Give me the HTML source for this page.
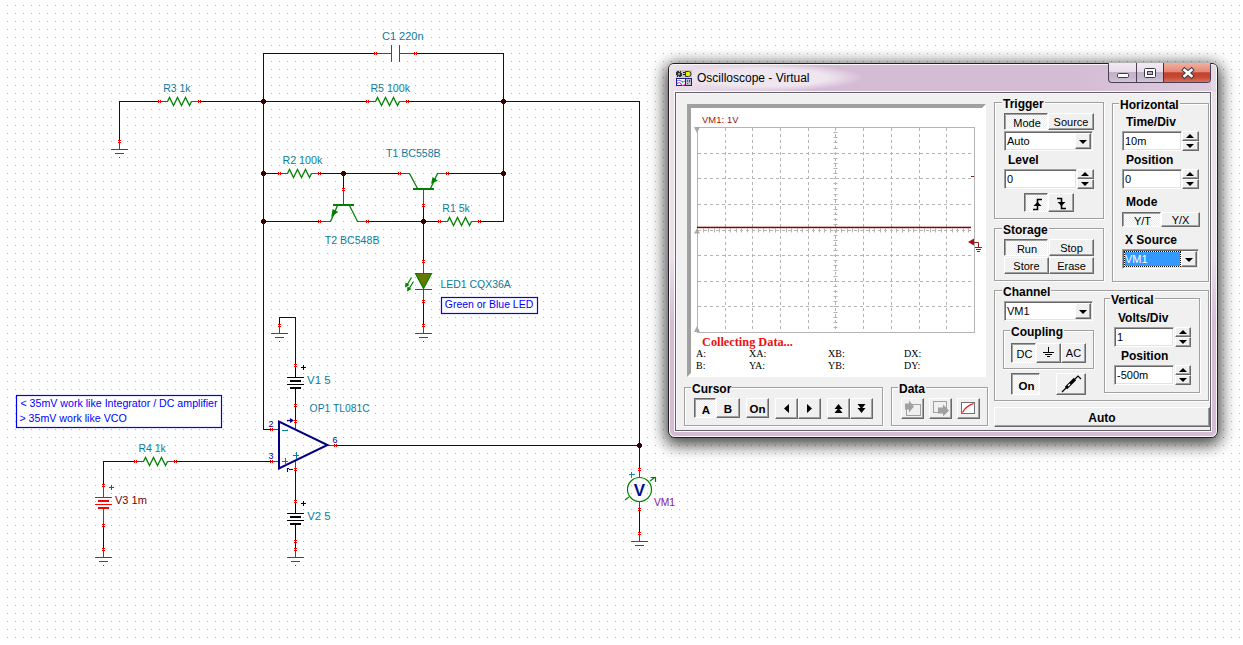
<!DOCTYPE html>
<html><head><meta charset="utf-8"><style>
html,body{margin:0;padding:0;width:1243px;height:645px;overflow:hidden;background:#fff;font-family:"Liberation Sans",sans-serif}
</style></head><body>
<svg width="1243" height="645" style="position:absolute;left:0;top:0" font-family="Liberation Sans, sans-serif">
<defs><pattern id="g" x="7" y="5" width="8" height="8" patternUnits="userSpaceOnUse"><rect width="1" height="1" fill="#b8b8b8"/></pattern></defs>
<rect width="1243" height="645" fill="#fff"/><rect width="1243" height="645" fill="url(#g)"/>
<rect x="119" y="101" width="41" height="1" fill="#3c0000"/>
<rect x="119" y="101" width="1" height="41" fill="#3c0000"/>
<rect x="119" y="143" width="1" height="7" fill="#008000"/>
<rect x="111" y="149" width="17" height="1" fill="#008000"/>
<rect x="115" y="153" width="9" height="1" fill="#008000"/>
<rect x="119" y="157" width="1" height="1" fill="#008000"/>
<path d="M118 140h1v1h-1zM120 140h1v1h-1zM118 142h1v1h-1zM120 142h1v1h-1zM119 140h1v3h-1z" fill="#ff0000"/>
<rect x="161" y="101" width="7" height="1" fill="#008000"/>
<rect x="191" y="101" width="7" height="1" fill="#008000"/>
<polyline points="167.5,101.5 169.5,97.5 173.5,105.5 177.5,97.5 181.5,105.5 185.5,97.5 189.5,105.5 191.5,101.5" fill="none" stroke="#008000" stroke-width="1.3"/>
<path d="M158 100h1v1h-1zM158 102h1v1h-1zM160 100h1v1h-1zM160 102h1v1h-1zM158 101h3v1h-3z" fill="#ff0000"/>
<path d="M198 100h1v1h-1zM198 102h1v1h-1zM200 100h1v1h-1zM200 102h1v1h-1zM198 101h3v1h-3z" fill="#ff0000"/>
<text x="163.22" y="92" fill="#0a7c9c" font-size="11" textLength="27.31" lengthAdjust="spacingAndGlyphs" >R3 1k</text>
<rect x="199" y="101" width="169" height="1" fill="#3c0000"/>
<rect x="369" y="101" width="7" height="1" fill="#008000"/>
<rect x="399" y="101" width="7" height="1" fill="#008000"/>
<polyline points="375.5,101.5 377.5,97.5 381.5,105.5 385.5,97.5 389.5,105.5 393.5,97.5 397.5,105.5 399.5,101.5" fill="none" stroke="#008000" stroke-width="1.3"/>
<path d="M366 100h1v1h-1zM366 102h1v1h-1zM368 100h1v1h-1zM368 102h1v1h-1zM366 101h3v1h-3z" fill="#ff0000"/>
<path d="M406 100h1v1h-1zM406 102h1v1h-1zM408 100h1v1h-1zM408 102h1v1h-1zM406 101h3v1h-3z" fill="#ff0000"/>
<text x="370.44" y="92" fill="#0a7c9c" font-size="11" textLength="39.55" lengthAdjust="spacingAndGlyphs" >R5 100k</text>
<rect x="407" y="101" width="233" height="1" fill="#3c0000"/>
<rect x="263" y="53" width="113" height="1" fill="#3c0000"/>
<rect x="415" y="53" width="89" height="1" fill="#3c0000"/>
<rect x="377" y="53" width="15" height="1" fill="#008000"/>
<rect x="399" y="53" width="15" height="1" fill="#008000"/>
<rect x="391" y="45" width="1" height="17" fill="#008000"/>
<rect x="399" y="45" width="1" height="17" fill="#008000"/>
<path d="M374 52h1v1h-1zM374 54h1v1h-1zM376 52h1v1h-1zM376 54h1v1h-1zM374 53h3v1h-3z" fill="#ff0000"/>
<path d="M414 52h1v1h-1zM414 54h1v1h-1zM416 52h1v1h-1zM416 54h1v1h-1zM414 53h3v1h-3z" fill="#ff0000"/>
<text x="382.00" y="40" fill="#0a7c9c" font-size="11" textLength="41.59" lengthAdjust="spacingAndGlyphs" >C1 220n</text>
<rect x="263" y="53" width="1" height="377" fill="#3c0000"/>
<rect x="503" y="53" width="1" height="169" fill="#3c0000"/>
<rect x="263" y="173" width="17" height="1" fill="#3c0000"/>
<rect x="281" y="173" width="7" height="1" fill="#008000"/>
<rect x="311" y="173" width="7" height="1" fill="#008000"/>
<polyline points="287.5,173.5 289.5,169.5 293.5,177.5 297.5,169.5 301.5,177.5 305.5,169.5 309.5,177.5 311.5,173.5" fill="none" stroke="#008000" stroke-width="1.3"/>
<path d="M278 172h1v1h-1zM278 174h1v1h-1zM280 172h1v1h-1zM280 174h1v1h-1zM278 173h3v1h-3z" fill="#ff0000"/>
<path d="M318 172h1v1h-1zM318 174h1v1h-1zM320 172h1v1h-1zM320 174h1v1h-1zM318 173h3v1h-3z" fill="#ff0000"/>
<text x="282.53" y="164" fill="#0a7c9c" font-size="11" textLength="39.75" lengthAdjust="spacingAndGlyphs" >R2 100k</text>
<rect x="319" y="173" width="81" height="1" fill="#3c0000"/>
<rect x="401" y="173" width="9" height="1" fill="#008000"/>
<polyline points="409.5,173.5 417.5,188.5" fill="none" stroke="#008000" stroke-width="1.3"/>
<rect x="413" y="188" width="21" height="2" fill="#008000"/>
<polyline points="430.5,188.5 437.5,173.5" fill="none" stroke="#008000" stroke-width="1.3"/>
<path d="M431.2 184 L432.5 177 L437.8 180.5 Z" fill="#008000"/>
<rect x="437" y="173" width="9" height="1" fill="#008000"/>
<rect x="423" y="190" width="1" height="14" fill="#008000"/>
<path d="M398 172h1v1h-1zM398 174h1v1h-1zM400 172h1v1h-1zM400 174h1v1h-1zM398 173h3v1h-3z" fill="#ff0000"/>
<path d="M446 172h1v1h-1zM446 174h1v1h-1zM448 172h1v1h-1zM448 174h1v1h-1zM446 173h3v1h-3z" fill="#ff0000"/>
<path d="M422 204h1v1h-1zM424 204h1v1h-1zM422 206h1v1h-1zM424 206h1v1h-1zM423 204h1v3h-1z" fill="#ff0000"/>
<rect x="447" y="173" width="57" height="1" fill="#3c0000"/>
<text x="386.10" y="157" fill="#0a7c9c" font-size="11" textLength="54.54" lengthAdjust="spacingAndGlyphs" >T1 BC558B</text>
<rect x="343" y="191" width="1" height="15" fill="#008000"/>
<rect x="333" y="204" width="21" height="2" fill="#008000"/>
<polyline points="337.5,205.5 330.5,221.5" fill="none" stroke="#008000" stroke-width="1.3"/>
<path d="M331.2 217 L332.6 209 L338.2 212 Z" fill="#008000"/>
<polyline points="349.5,205.5 357.5,221.5" fill="none" stroke="#008000" stroke-width="1.3"/>
<rect x="321" y="221" width="10" height="1" fill="#008000"/>
<rect x="357" y="221" width="9" height="1" fill="#008000"/>
<rect x="343" y="173" width="1" height="17" fill="#3c0000"/>
<path d="M342 188h1v1h-1zM344 188h1v1h-1zM342 190h1v1h-1zM344 190h1v1h-1zM343 188h1v3h-1z" fill="#ff0000"/>
<path d="M318 220h1v1h-1zM318 222h1v1h-1zM320 220h1v1h-1zM320 222h1v1h-1zM318 221h3v1h-3z" fill="#ff0000"/>
<path d="M366 220h1v1h-1zM366 222h1v1h-1zM368 220h1v1h-1zM368 222h1v1h-1zM366 221h3v1h-3z" fill="#ff0000"/>
<text x="324.80" y="244" fill="#0a7c9c" font-size="11" textLength="54.64" lengthAdjust="spacingAndGlyphs" >T2 BC548B</text>
<rect x="263" y="221" width="57" height="1" fill="#3c0000"/>
<rect x="367" y="221" width="73" height="1" fill="#3c0000"/>
<rect x="441" y="221" width="7" height="1" fill="#008000"/>
<rect x="471" y="221" width="7" height="1" fill="#008000"/>
<polyline points="447.5,221.5 449.5,217.5 453.5,225.5 457.5,217.5 461.5,225.5 465.5,217.5 469.5,225.5 471.5,221.5" fill="none" stroke="#008000" stroke-width="1.3"/>
<path d="M438 220h1v1h-1zM438 222h1v1h-1zM440 220h1v1h-1zM440 222h1v1h-1zM438 221h3v1h-3z" fill="#ff0000"/>
<path d="M478 220h1v1h-1zM478 222h1v1h-1zM480 220h1v1h-1zM480 222h1v1h-1zM478 221h3v1h-3z" fill="#ff0000"/>
<text x="442.34" y="212" fill="#0a7c9c" font-size="11" textLength="27.52" lengthAdjust="spacingAndGlyphs" >R1 5k</text>
<rect x="479" y="221" width="25" height="1" fill="#3c0000"/>
<rect x="423" y="205" width="1" height="57" fill="#3c0000"/>
<rect x="423" y="263" width="1" height="11" fill="#008000"/>
<path d="M415.5 273.5 H431.5 L423.5 288.5 Z" fill="#667800" stroke="#008000" stroke-width="1.2"/>
<rect x="415" y="289" width="17" height="1" fill="#008000"/>
<rect x="423" y="289" width="1" height="11" fill="#008000"/>
<path d="M422 260h1v1h-1zM424 260h1v1h-1zM422 262h1v1h-1zM424 262h1v1h-1zM423 260h1v3h-1z" fill="#ff0000"/>
<path d="M422 300h1v1h-1zM424 300h1v1h-1zM422 302h1v1h-1zM424 302h1v1h-1zM423 300h1v3h-1z" fill="#ff0000"/>
<path d="M411.5 277.5 L406 286.5 M413.5 281.5 L408 290.5" stroke="#008000" stroke-width="1.2" fill="none"/>
<path d="M405 287.5 L405.5 282.5 L409.5 285 Z M407 291.5 L407.5 286.5 L411.5 289 Z" fill="#008000"/>
<rect x="423" y="301" width="1" height="25" fill="#3c0000"/>
<rect x="423" y="327" width="1" height="7" fill="#008000"/>
<rect x="415" y="333" width="17" height="1" fill="#008000"/>
<rect x="419" y="337" width="9" height="1" fill="#008000"/>
<rect x="423" y="341" width="1" height="1" fill="#008000"/>
<path d="M422 324h1v1h-1zM424 324h1v1h-1zM422 326h1v1h-1zM424 326h1v1h-1zM423 324h1v3h-1z" fill="#ff0000"/>
<text x="440.55" y="288" fill="#0a7c9c" font-size="11" textLength="70.23" lengthAdjust="spacingAndGlyphs" >LED1 CQX36A</text>
<rect x="441.5" y="297.5" width="96" height="16" fill="#fff" stroke="#0000ff" stroke-width="1.2"/>
<text x="444.75" y="308" fill="#0000ff" font-size="11" textLength="88.49" lengthAdjust="spacingAndGlyphs" >Green or Blue LED</text>
<rect x="279" y="317" width="17" height="1" fill="#3c0000"/>
<rect x="279" y="317" width="1" height="9" fill="#3c0000"/>
<rect x="279" y="327" width="1" height="7" fill="#008000"/>
<rect x="271" y="333" width="17" height="1" fill="#008000"/>
<rect x="275" y="337" width="9" height="1" fill="#008000"/>
<rect x="279" y="341" width="1" height="1" fill="#008000"/>
<path d="M278 324h1v1h-1zM280 324h1v1h-1zM278 326h1v1h-1zM280 326h1v1h-1zM279 324h1v3h-1z" fill="#ff0000"/>
<rect x="295" y="317" width="1" height="49" fill="#3c0000"/>
<rect x="295" y="367" width="1" height="11" fill="#000000"/>
<rect x="287" y="377" width="17" height="1" fill="#000000"/>
<rect x="290" y="380" width="11" height="2" fill="#000000"/>
<rect x="287" y="384" width="17" height="1" fill="#000000"/>
<rect x="290" y="387" width="11" height="2" fill="#000000"/>
<rect x="295" y="389" width="1" height="15" fill="#000000"/>
<path d="M294 364h1v1h-1zM296 364h1v1h-1zM294 366h1v1h-1zM296 366h1v1h-1zM295 364h1v3h-1z" fill="#ff0000"/>
<path d="M294 404h1v1h-1zM296 404h1v1h-1zM294 406h1v1h-1zM296 406h1v1h-1zM295 404h1v3h-1z" fill="#ff0000"/>
<rect x="301" y="367" width="5" height="1" fill="#000000"/>
<rect x="303" y="365" width="1" height="5" fill="#000000"/>
<text x="307.10" y="384" fill="#0a7c9c" font-size="11" textLength="23.46" lengthAdjust="spacingAndGlyphs" >V1 5</text>
<rect x="295" y="405" width="1" height="17" fill="#3c0000"/>
<text x="309.60" y="412" fill="#0a7c9c" font-size="11" textLength="60.15" lengthAdjust="spacingAndGlyphs" >OP1 TL081C</text>
<rect x="295" y="423" width="1" height="7" fill="#008000"/>
<rect x="295" y="461" width="1" height="7" fill="#008000"/>
<rect x="273" y="429" width="7" height="1" fill="#008000"/>
<rect x="273" y="461" width="7" height="1" fill="#008000"/>
<rect x="327" y="445" width="7" height="1" fill="#008000"/>
<path d="M270 428h1v1h-1zM270 430h1v1h-1zM272 428h1v1h-1zM272 430h1v1h-1zM270 429h3v1h-3z" fill="#ff0000"/>
<path d="M270 460h1v1h-1zM270 462h1v1h-1zM272 460h1v1h-1zM272 462h1v1h-1zM270 461h3v1h-3z" fill="#ff0000"/>
<path d="M334 444h1v1h-1zM334 446h1v1h-1zM336 444h1v1h-1zM336 446h1v1h-1zM334 445h3v1h-3z" fill="#ff0000"/>
<path d="M294 420h1v1h-1zM296 420h1v1h-1zM294 422h1v1h-1zM296 422h1v1h-1zM295 420h1v3h-1z" fill="#ff0000"/>
<path d="M294 468h1v1h-1zM296 468h1v1h-1zM294 470h1v1h-1zM296 470h1v1h-1zM295 468h1v3h-1z" fill="#ff0000"/>
<path d="M279 421.5 L279 468.5 L327.5 445 Z" fill="none" stroke="#000080" stroke-width="2" stroke-linejoin="miter" stroke-miterlimit="10"/>
<text x="268.5" y="427" fill="#000080" font-size="9" >2</text>
<text x="268.5" y="459" fill="#000080" font-size="9" >3</text>
<text x="332.5" y="443" fill="#000080" font-size="9" >6</text>
<rect x="282" y="430" width="6" height="1" fill="#0a7c9c"/>
<rect x="282" y="461" width="6" height="1" fill="#0a7c9c"/>
<rect x="285" y="458" width="1" height="7" fill="#0a7c9c"/>
<rect x="293" y="455" width="6" height="1" fill="#0a7c9c"/>
<rect x="296" y="452" width="1" height="7" fill="#0a7c9c"/>
<path d="M287 420.5 H292" stroke="#000080" stroke-width="1.2"/><path d="M294 420.5 L290 418 V423 Z" fill="#000080"/>
<path d="M287.5 472 V468.5 H289 M289 469.5 H293" fill="none" stroke="#000080" stroke-width="1.1"/>
<rect x="263" y="429" width="9" height="1" fill="#3c0000"/>
<rect x="335" y="445" width="305" height="1" fill="#3c0000"/>
<path d="M638 443h3v1h1v3h-1v1h-3v-1h-1v-3h1z" fill="#3c0000"/>
<rect x="103" y="461" width="33" height="1" fill="#3c0000"/>
<rect x="103" y="461" width="1" height="25" fill="#3c0000"/>
<rect x="137" y="461" width="7" height="1" fill="#008000"/>
<rect x="167" y="461" width="7" height="1" fill="#008000"/>
<polyline points="143.5,461.5 145.5,457.5 149.5,465.5 153.5,457.5 157.5,465.5 161.5,457.5 165.5,465.5 167.5,461.5" fill="none" stroke="#008000" stroke-width="1.3"/>
<path d="M134 460h1v1h-1zM134 462h1v1h-1zM136 460h1v1h-1zM136 462h1v1h-1zM134 461h3v1h-3z" fill="#ff0000"/>
<path d="M174 460h1v1h-1zM174 462h1v1h-1zM176 460h1v1h-1zM176 462h1v1h-1zM174 461h3v1h-3z" fill="#ff0000"/>
<text x="138.45" y="452" fill="#0a7c9c" font-size="11" textLength="27.42" lengthAdjust="spacingAndGlyphs" >R4 1k</text>
<rect x="175" y="461" width="97" height="1" fill="#3c0000"/>
<rect x="103" y="487" width="1" height="11" fill="#ff0000"/>
<rect x="95" y="497" width="17" height="1" fill="#ff0000"/>
<rect x="98" y="500" width="11" height="2" fill="#ff0000"/>
<rect x="95" y="504" width="17" height="1" fill="#ff0000"/>
<rect x="98" y="507" width="11" height="2" fill="#ff0000"/>
<rect x="103" y="509" width="1" height="15" fill="#ff0000"/>
<path d="M102 484h1v1h-1zM104 484h1v1h-1zM102 486h1v1h-1zM104 486h1v1h-1zM103 484h1v3h-1z" fill="#ff0000"/>
<path d="M102 524h1v1h-1zM104 524h1v1h-1zM102 526h1v1h-1zM104 526h1v1h-1zM103 524h1v3h-1z" fill="#ff0000"/>
<rect x="109" y="487" width="5" height="1" fill="#ff0000"/>
<rect x="111" y="485" width="1" height="5" fill="#ff0000"/>
<text x="114.90" y="504" fill="#800000" font-size="11" textLength="32.00" lengthAdjust="spacingAndGlyphs" >V3 1m</text>
<rect x="103" y="525" width="1" height="25" fill="#3c0000"/>
<rect x="103" y="551" width="1" height="7" fill="#008000"/>
<rect x="95" y="557" width="17" height="1" fill="#008000"/>
<rect x="99" y="561" width="9" height="1" fill="#008000"/>
<rect x="103" y="565" width="1" height="1" fill="#008000"/>
<path d="M102 548h1v1h-1zM104 548h1v1h-1zM102 550h1v1h-1zM104 550h1v1h-1zM103 548h1v3h-1z" fill="#ff0000"/>
<rect x="295" y="469" width="1" height="33" fill="#3c0000"/>
<rect x="295" y="503" width="1" height="11" fill="#000000"/>
<rect x="287" y="513" width="17" height="1" fill="#000000"/>
<rect x="290" y="516" width="11" height="2" fill="#000000"/>
<rect x="287" y="520" width="17" height="1" fill="#000000"/>
<rect x="290" y="523" width="11" height="2" fill="#000000"/>
<rect x="295" y="525" width="1" height="15" fill="#000000"/>
<path d="M294 500h1v1h-1zM296 500h1v1h-1zM294 502h1v1h-1zM296 502h1v1h-1zM295 500h1v3h-1z" fill="#ff0000"/>
<path d="M294 540h1v1h-1zM296 540h1v1h-1zM294 542h1v1h-1zM296 542h1v1h-1zM295 540h1v3h-1z" fill="#ff0000"/>
<rect x="301" y="503" width="5" height="1" fill="#000000"/>
<rect x="303" y="501" width="1" height="5" fill="#000000"/>
<text x="307.20" y="520" fill="#0a7c9c" font-size="11" textLength="23.36" lengthAdjust="spacingAndGlyphs" >V2 5</text>
<rect x="295" y="541" width="1" height="9" fill="#3c0000"/>
<rect x="295" y="551" width="1" height="7" fill="#008000"/>
<rect x="287" y="557" width="17" height="1" fill="#008000"/>
<rect x="291" y="561" width="9" height="1" fill="#008000"/>
<rect x="295" y="565" width="1" height="1" fill="#008000"/>
<path d="M294 548h1v1h-1zM296 548h1v1h-1zM294 550h1v1h-1zM296 550h1v1h-1zM295 548h1v3h-1z" fill="#ff0000"/>
<rect x="639" y="101" width="1" height="345" fill="#3c0000"/>
<rect x="639" y="445" width="1" height="25" fill="#3c0000"/>
<rect x="639" y="471" width="1" height="7" fill="#008000"/>
<rect x="639" y="501" width="1" height="7" fill="#008000"/>
<circle cx="639.5" cy="489.5" r="12" fill="none" stroke="#008000" stroke-width="1.2"/>
<path d="M625 500 L629 497 M650 481 L655.5 477" stroke="#008000" stroke-width="1.2"/><path d="M650.5 477.5 H655.5 V482" fill="none" stroke="#008000" stroke-width="1.2"/>
<text x="639.5" y="495.5" fill="#00108a" font-size="17" font-weight="bold" text-anchor="middle">V</text>
<rect x="629" y="474" width="6" height="1" fill="#1a86a8"/>
<rect x="631" y="472" width="1" height="6" fill="#1a86a8"/>
<path d="M638 468h1v1h-1zM640 468h1v1h-1zM638 470h1v1h-1zM640 470h1v1h-1zM639 468h1v3h-1z" fill="#ff0000"/>
<path d="M638 508h1v1h-1zM640 508h1v1h-1zM638 510h1v1h-1zM640 510h1v1h-1zM639 508h1v3h-1z" fill="#ff0000"/>
<rect x="639" y="509" width="1" height="25" fill="#3c0000"/>
<rect x="639" y="535" width="1" height="7" fill="#008000"/>
<rect x="631" y="541" width="17" height="1" fill="#008000"/>
<rect x="635" y="545" width="9" height="1" fill="#008000"/>
<rect x="639" y="549" width="1" height="1" fill="#008000"/>
<path d="M638 532h1v1h-1zM640 532h1v1h-1zM638 534h1v1h-1zM640 534h1v1h-1zM639 532h1v3h-1z" fill="#ff0000"/>
<text x="654.00" y="506" fill="#8a10a0" font-size="11" textLength="21.08" lengthAdjust="spacingAndGlyphs" >VM1</text>
<path d="M262 99h3v1h1v3h-1v1h-3v-1h-1v-3h1z" fill="#3c0000"/>
<path d="M502 99h3v1h1v3h-1v1h-3v-1h-1v-3h1z" fill="#3c0000"/>
<path d="M262 171h3v1h1v3h-1v1h-3v-1h-1v-3h1z" fill="#3c0000"/>
<path d="M342 171h3v1h1v3h-1v1h-3v-1h-1v-3h1z" fill="#3c0000"/>
<path d="M502 171h3v1h1v3h-1v1h-3v-1h-1v-3h1z" fill="#3c0000"/>
<path d="M262 219h3v1h1v3h-1v1h-3v-1h-1v-3h1z" fill="#3c0000"/>
<path d="M422 219h3v1h1v3h-1v1h-3v-1h-1v-3h1z" fill="#3c0000"/>
<rect x="16.5" y="395.5" width="205" height="32" fill="#fff" stroke="#0000ff" stroke-width="1.2"/>
<text x="20.40" y="407" fill="#0000ff" font-size="11" textLength="197.19" lengthAdjust="spacingAndGlyphs" >&lt; 35mV work like Integrator / DC amplifier</text>
<text x="19.43" y="422" fill="#0000ff" font-size="11" textLength="107.31" lengthAdjust="spacingAndGlyphs" >&gt; 35mV work like VCO</text>
</svg>
<div style="position:absolute;left:668px;top:63px;width:548px;height:373px;border:1px solid #202020;border-radius:6px 6px 7px 7px;box-shadow:0 4px 16px 3px rgba(0,0,0,.74);background:#d4bcd4"></div>
<div style="position:absolute;left:669px;top:64px;width:548px;height:373px;border-radius:5px 5px 6px 6px;box-shadow:inset 0 0 0 1px rgba(255,255,255,.85)"></div>
<div style="position:absolute;left:670px;top:65px;width:5px;height:371px;background:linear-gradient(180deg,rgba(236,226,236,.95) 0px,rgba(236,226,236,.95) 190px,rgba(236,226,236,0) 260px)"></div>
<div style="position:absolute;left:1211px;top:65px;width:5px;height:371px;background:linear-gradient(180deg,rgba(236,226,236,.95) 0px,rgba(236,226,236,.95) 190px,rgba(236,226,236,0) 260px)"></div>
<div style="position:absolute;left:670px;top:65px;width:546px;height:27px;border-radius:5px 5px 0 0;background:linear-gradient(90deg,rgba(236,226,236,.95) 0px,rgba(236,226,236,.8) 25px,rgba(212,188,212,0) 150px,rgba(212,188,212,0) 400px,rgba(226,212,226,.7) 546px)"></div>
<div style="position:absolute;left:672px;top:64px;width:190px;height:27px;border-radius:14px;background:radial-gradient(ellipse at center,rgba(240,232,240,.95) 45%,rgba(240,232,240,0) 72%)"></div>
<svg style="position:absolute;left:676px;top:70px" width="16" height="16"><rect x="0" y="0" width="16" height="7.5" fill="#c4c4c4"/><path d="M1 1h2v1h1v-1h1v2h1v3h-1v1h-2v-1h-1v1h-1v-2h-1v-3h1z" fill="#303030"/><path d="M2 3h2v2h-2z" fill="#9a9a9a"/><path d="M7 2.5h2" stroke="#202020"/><path d="M7 4.5h2" stroke="#202020"/><path d="M9.5 1.5 H12.5 A2.5 2.5 0 0 1 12.5 6.5 H9.5 Z" fill="#f0f000" stroke="#303050"/><rect x="0.5" y="8.5" width="15" height="7" fill="#fff" stroke="#20208a"/><path d="M9.5 8 V16" stroke="#20208a"/><rect x="10" y="9" width="5" height="6" fill="#b8bcc8"/><path d="M1 11 q2 -2 4 0 t4 0" fill="none" stroke="#6060ff" stroke-width="1"/><path d="M1 14 q2 -3 4 0 t4 0" fill="none" stroke="#e020e0" stroke-width="1.2"/><path d="M3 12.5 h1 M6 12.5 h1" stroke="#40e040"/><rect x="11" y="10" width="1" height="2" fill="#208080"/><rect x="13" y="10" width="1" height="2" fill="#4040a0"/><rect x="11" y="13" width="1" height="1" fill="#e02020"/></svg>
<div style="position:absolute;left:697px;top:71px;white-space:nowrap;line-height:13px;font-size:12px;line-height:15px;color:#000">Oscilloscope - Virtual</div>
<div style="position:absolute;left:1108px;top:63px;width:101px;height:19px;border:1px solid #4a3e52;border-top:none;border-radius:0 0 4px 4px;overflow:hidden;background:linear-gradient(#f2eaf3 0,#e8dcea 45%,#c2b2c8 50%,#c6b8cc 80%,#d4c8d8 100%)"><div style="position:absolute;left:54px;top:0;width:47px;height:19px;border-left:1px solid #5a2a20;background:linear-gradient(#f0b0a2 0,#e48a78 45%,#c6402a 52%,#c84a34 75%,#d87060 100%)"></div><div style="position:absolute;left:27px;top:0;width:1px;height:19px;background:#4a3e52"></div></div>
<svg style="position:absolute;left:0;top:0" width="1243" height="645"><rect x="1117.5" y="73.5" width="11" height="4" rx="1" fill="#fff" stroke="#3a3a4a"/><rect x="1144.5" y="68.5" width="11" height="9" rx="1" fill="#fff" stroke="#3a3a4a"/><rect x="1147.5" y="71.5" width="5" height="3" fill="#c0b0c8" stroke="#3a3a4a"/><path d="M1184.5 70 L1191.5 76 M1191.5 70 L1184.5 76" stroke="#3a3a4a" stroke-width="4.6" stroke-linecap="square"/><path d="M1184.5 70 L1191.5 76 M1191.5 70 L1184.5 76" stroke="#fff" stroke-width="2.6" stroke-linecap="square"/></svg>
<div style="position:absolute;left:675px;top:92px;width:534px;height:337px;border:1px solid #64606a;background:#f0f0f0;box-shadow:0 0 0 1px rgba(255,255,255,.9),inset 1px 1px #f8f8f8"></div>
<div style="position:absolute;left:687px;top:104px;width:291px;height:265px;border:4px solid;border-color:#a0a0a0 #fff #fff #a0a0a0;background:#fff"></div>
<svg style="position:absolute;left:0;top:0" width="1243" height="645">
<line x1="725.5" y1="128" x2="725.5" y2="332" stroke="#b4b4b4" stroke-dasharray="3 3"/>
<line x1="752.5" y1="128" x2="752.5" y2="332" stroke="#b4b4b4" stroke-dasharray="3 3"/>
<line x1="780.5" y1="128" x2="780.5" y2="332" stroke="#b4b4b4" stroke-dasharray="3 3"/>
<line x1="808.5" y1="128" x2="808.5" y2="332" stroke="#b4b4b4" stroke-dasharray="3 3"/>
<line x1="835.5" y1="128" x2="835.5" y2="332" stroke="#b4b4b4" stroke-dasharray="3 3"/>
<line x1="863.5" y1="128" x2="863.5" y2="332" stroke="#b4b4b4" stroke-dasharray="3 3"/>
<line x1="891.5" y1="128" x2="891.5" y2="332" stroke="#b4b4b4" stroke-dasharray="3 3"/>
<line x1="919.5" y1="128" x2="919.5" y2="332" stroke="#b4b4b4" stroke-dasharray="3 3"/>
<line x1="946.5" y1="128" x2="946.5" y2="332" stroke="#b4b4b4" stroke-dasharray="3 3"/>
<line x1="698" y1="153.5" x2="974" y2="153.5" stroke="#b4b4b4" stroke-dasharray="3 3"/>
<line x1="698" y1="178.5" x2="974" y2="178.5" stroke="#b4b4b4" stroke-dasharray="3 3"/>
<line x1="698" y1="204.5" x2="974" y2="204.5" stroke="#b4b4b4" stroke-dasharray="3 3"/>
<line x1="698" y1="230.5" x2="974" y2="230.5" stroke="#b4b4b4" stroke-dasharray="3 3"/>
<line x1="698" y1="255.5" x2="974" y2="255.5" stroke="#b4b4b4" stroke-dasharray="3 3"/>
<line x1="698" y1="281.5" x2="974" y2="281.5" stroke="#b4b4b4" stroke-dasharray="3 3"/>
<line x1="698" y1="306.5" x2="974" y2="306.5" stroke="#b4b4b4" stroke-dasharray="3 3"/>
<rect x="697.5" y="127.5" width="277" height="205" fill="none" stroke="#b4b4b4"/>
<line x1="833.5" y1="127.5" x2="837.5" y2="127.5" stroke="#b4b4b4"/>
<line x1="833.5" y1="132.5" x2="837.5" y2="132.5" stroke="#b4b4b4"/>
<line x1="833.5" y1="137.5" x2="837.5" y2="137.5" stroke="#b4b4b4"/>
<line x1="833.5" y1="142.5" x2="837.5" y2="142.5" stroke="#b4b4b4"/>
<line x1="833.5" y1="148.5" x2="837.5" y2="148.5" stroke="#b4b4b4"/>
<line x1="833.5" y1="153.5" x2="837.5" y2="153.5" stroke="#b4b4b4"/>
<line x1="833.5" y1="158.5" x2="837.5" y2="158.5" stroke="#b4b4b4"/>
<line x1="833.5" y1="163.5" x2="837.5" y2="163.5" stroke="#b4b4b4"/>
<line x1="833.5" y1="168.5" x2="837.5" y2="168.5" stroke="#b4b4b4"/>
<line x1="833.5" y1="173.5" x2="837.5" y2="173.5" stroke="#b4b4b4"/>
<line x1="833.5" y1="178.5" x2="837.5" y2="178.5" stroke="#b4b4b4"/>
<line x1="833.5" y1="183.5" x2="837.5" y2="183.5" stroke="#b4b4b4"/>
<line x1="833.5" y1="188.5" x2="837.5" y2="188.5" stroke="#b4b4b4"/>
<line x1="833.5" y1="194.5" x2="837.5" y2="194.5" stroke="#b4b4b4"/>
<line x1="833.5" y1="199.5" x2="837.5" y2="199.5" stroke="#b4b4b4"/>
<line x1="833.5" y1="204.5" x2="837.5" y2="204.5" stroke="#b4b4b4"/>
<line x1="833.5" y1="209.5" x2="837.5" y2="209.5" stroke="#b4b4b4"/>
<line x1="833.5" y1="214.5" x2="837.5" y2="214.5" stroke="#b4b4b4"/>
<line x1="833.5" y1="219.5" x2="837.5" y2="219.5" stroke="#b4b4b4"/>
<line x1="833.5" y1="224.5" x2="837.5" y2="224.5" stroke="#b4b4b4"/>
<line x1="833.5" y1="230.5" x2="837.5" y2="230.5" stroke="#b4b4b4"/>
<line x1="833.5" y1="235.5" x2="837.5" y2="235.5" stroke="#b4b4b4"/>
<line x1="833.5" y1="240.5" x2="837.5" y2="240.5" stroke="#b4b4b4"/>
<line x1="833.5" y1="245.5" x2="837.5" y2="245.5" stroke="#b4b4b4"/>
<line x1="833.5" y1="250.5" x2="837.5" y2="250.5" stroke="#b4b4b4"/>
<line x1="833.5" y1="255.5" x2="837.5" y2="255.5" stroke="#b4b4b4"/>
<line x1="833.5" y1="260.5" x2="837.5" y2="260.5" stroke="#b4b4b4"/>
<line x1="833.5" y1="265.5" x2="837.5" y2="265.5" stroke="#b4b4b4"/>
<line x1="833.5" y1="270.5" x2="837.5" y2="270.5" stroke="#b4b4b4"/>
<line x1="833.5" y1="276.5" x2="837.5" y2="276.5" stroke="#b4b4b4"/>
<line x1="833.5" y1="281.5" x2="837.5" y2="281.5" stroke="#b4b4b4"/>
<line x1="833.5" y1="286.5" x2="837.5" y2="286.5" stroke="#b4b4b4"/>
<line x1="833.5" y1="291.5" x2="837.5" y2="291.5" stroke="#b4b4b4"/>
<line x1="833.5" y1="296.5" x2="837.5" y2="296.5" stroke="#b4b4b4"/>
<line x1="833.5" y1="301.5" x2="837.5" y2="301.5" stroke="#b4b4b4"/>
<line x1="833.5" y1="306.5" x2="837.5" y2="306.5" stroke="#b4b4b4"/>
<line x1="833.5" y1="312.5" x2="837.5" y2="312.5" stroke="#b4b4b4"/>
<line x1="833.5" y1="317.5" x2="837.5" y2="317.5" stroke="#b4b4b4"/>
<line x1="833.5" y1="322.5" x2="837.5" y2="322.5" stroke="#b4b4b4"/>
<line x1="833.5" y1="327.5" x2="837.5" y2="327.5" stroke="#b4b4b4"/>
<line x1="697.5" y1="228.5" x2="697.5" y2="232.5" stroke="#b4b4b4"/>
<line x1="703.5" y1="228.5" x2="703.5" y2="232.5" stroke="#b4b4b4"/>
<line x1="708.5" y1="228.5" x2="708.5" y2="232.5" stroke="#b4b4b4"/>
<line x1="714.5" y1="228.5" x2="714.5" y2="232.5" stroke="#b4b4b4"/>
<line x1="719.5" y1="228.5" x2="719.5" y2="232.5" stroke="#b4b4b4"/>
<line x1="725.5" y1="228.5" x2="725.5" y2="232.5" stroke="#b4b4b4"/>
<line x1="730.5" y1="228.5" x2="730.5" y2="232.5" stroke="#b4b4b4"/>
<line x1="736.5" y1="228.5" x2="736.5" y2="232.5" stroke="#b4b4b4"/>
<line x1="741.5" y1="228.5" x2="741.5" y2="232.5" stroke="#b4b4b4"/>
<line x1="747.5" y1="228.5" x2="747.5" y2="232.5" stroke="#b4b4b4"/>
<line x1="752.5" y1="228.5" x2="752.5" y2="232.5" stroke="#b4b4b4"/>
<line x1="758.5" y1="228.5" x2="758.5" y2="232.5" stroke="#b4b4b4"/>
<line x1="763.5" y1="228.5" x2="763.5" y2="232.5" stroke="#b4b4b4"/>
<line x1="769.5" y1="228.5" x2="769.5" y2="232.5" stroke="#b4b4b4"/>
<line x1="775.5" y1="228.5" x2="775.5" y2="232.5" stroke="#b4b4b4"/>
<line x1="780.5" y1="228.5" x2="780.5" y2="232.5" stroke="#b4b4b4"/>
<line x1="786.5" y1="228.5" x2="786.5" y2="232.5" stroke="#b4b4b4"/>
<line x1="791.5" y1="228.5" x2="791.5" y2="232.5" stroke="#b4b4b4"/>
<line x1="797.5" y1="228.5" x2="797.5" y2="232.5" stroke="#b4b4b4"/>
<line x1="802.5" y1="228.5" x2="802.5" y2="232.5" stroke="#b4b4b4"/>
<line x1="808.5" y1="228.5" x2="808.5" y2="232.5" stroke="#b4b4b4"/>
<line x1="813.5" y1="228.5" x2="813.5" y2="232.5" stroke="#b4b4b4"/>
<line x1="819.5" y1="228.5" x2="819.5" y2="232.5" stroke="#b4b4b4"/>
<line x1="824.5" y1="228.5" x2="824.5" y2="232.5" stroke="#b4b4b4"/>
<line x1="830.5" y1="228.5" x2="830.5" y2="232.5" stroke="#b4b4b4"/>
<line x1="836.5" y1="228.5" x2="836.5" y2="232.5" stroke="#b4b4b4"/>
<line x1="841.5" y1="228.5" x2="841.5" y2="232.5" stroke="#b4b4b4"/>
<line x1="847.5" y1="228.5" x2="847.5" y2="232.5" stroke="#b4b4b4"/>
<line x1="852.5" y1="228.5" x2="852.5" y2="232.5" stroke="#b4b4b4"/>
<line x1="858.5" y1="228.5" x2="858.5" y2="232.5" stroke="#b4b4b4"/>
<line x1="863.5" y1="228.5" x2="863.5" y2="232.5" stroke="#b4b4b4"/>
<line x1="869.5" y1="228.5" x2="869.5" y2="232.5" stroke="#b4b4b4"/>
<line x1="874.5" y1="228.5" x2="874.5" y2="232.5" stroke="#b4b4b4"/>
<line x1="880.5" y1="228.5" x2="880.5" y2="232.5" stroke="#b4b4b4"/>
<line x1="885.5" y1="228.5" x2="885.5" y2="232.5" stroke="#b4b4b4"/>
<line x1="891.5" y1="228.5" x2="891.5" y2="232.5" stroke="#b4b4b4"/>
<line x1="896.5" y1="228.5" x2="896.5" y2="232.5" stroke="#b4b4b4"/>
<line x1="902.5" y1="228.5" x2="902.5" y2="232.5" stroke="#b4b4b4"/>
<line x1="908.5" y1="228.5" x2="908.5" y2="232.5" stroke="#b4b4b4"/>
<line x1="913.5" y1="228.5" x2="913.5" y2="232.5" stroke="#b4b4b4"/>
<line x1="919.5" y1="228.5" x2="919.5" y2="232.5" stroke="#b4b4b4"/>
<line x1="924.5" y1="228.5" x2="924.5" y2="232.5" stroke="#b4b4b4"/>
<line x1="930.5" y1="228.5" x2="930.5" y2="232.5" stroke="#b4b4b4"/>
<line x1="935.5" y1="228.5" x2="935.5" y2="232.5" stroke="#b4b4b4"/>
<line x1="941.5" y1="228.5" x2="941.5" y2="232.5" stroke="#b4b4b4"/>
<line x1="946.5" y1="228.5" x2="946.5" y2="232.5" stroke="#b4b4b4"/>
<line x1="952.5" y1="228.5" x2="952.5" y2="232.5" stroke="#b4b4b4"/>
<line x1="957.5" y1="228.5" x2="957.5" y2="232.5" stroke="#b4b4b4"/>
<line x1="963.5" y1="228.5" x2="963.5" y2="232.5" stroke="#b4b4b4"/>
<line x1="968.5" y1="228.5" x2="968.5" y2="232.5" stroke="#b4b4b4"/>
<path d="M694 127 h6 l-3 6z M694 233.5 h6 l-3 -5z M694 332 h6 l-3 -6z" fill="#a8a8a8"/>
<rect x="697" y="227" width="274" height="1" fill="#8c0000"/><rect x="697" y="226" width="274" height="1" fill="#8c0000" fill-opacity=".3"/><rect x="697" y="228" width="274" height="1" fill="#8c0000" fill-opacity=".2"/>
<rect x="971" y="176" width="3" height="1" fill="#9c1414"/>
<path d="M968 242 L974 238.5 V245.5 Z" fill="#9c1414"/><path d="M974 242.5 H978.5 V247" fill="none" stroke="#9c1414"/><path d="M975 247.5 H982 M976 249.5 H981 M977 251.5 H980" stroke="#9c1414"/>
</svg>
<div style="position:absolute;left:702px;top:113px;white-space:nowrap;line-height:13px;font-size:9.4px;color:#a01010;letter-spacing:0.1px">VM1: 1V</div>
<div style="position:absolute;left:702px;top:336px;white-space:nowrap;line-height:13px;font-family:'Liberation Serif',serif;font-weight:bold;font-size:12.3px;color:#f01010">Collecting Data...</div>
<div style="position:absolute;left:696px;top:347px;white-space:nowrap;line-height:13px;font-family:'Liberation Serif',serif;font-size:10px">A:</div>
<div style="position:absolute;left:749px;top:347px;white-space:nowrap;line-height:13px;font-family:'Liberation Serif',serif;font-size:10px">XA:</div>
<div style="position:absolute;left:828px;top:347px;white-space:nowrap;line-height:13px;font-family:'Liberation Serif',serif;font-size:10px">XB:</div>
<div style="position:absolute;left:904px;top:347px;white-space:nowrap;line-height:13px;font-family:'Liberation Serif',serif;font-size:10px">DX:</div>
<div style="position:absolute;left:696px;top:359px;white-space:nowrap;line-height:13px;font-family:'Liberation Serif',serif;font-size:10px">B:</div>
<div style="position:absolute;left:749px;top:359px;white-space:nowrap;line-height:13px;font-family:'Liberation Serif',serif;font-size:10px">YA:</div>
<div style="position:absolute;left:828px;top:359px;white-space:nowrap;line-height:13px;font-family:'Liberation Serif',serif;font-size:10px">YB:</div>
<div style="position:absolute;left:904px;top:359px;white-space:nowrap;line-height:13px;font-family:'Liberation Serif',serif;font-size:10px">DY:</div>
<div style="position:absolute;left:994px;top:102px;width:108px;height:115px;border:1px solid #a0a0a0;box-shadow:inset 1px 1px #fff,1px 1px #fff"></div>
<div style="position:absolute;left:1002px;top:97px;padding:0 1px;background:#f0f0f0;font-size:12px;font-weight:bold;line-height:14px;white-space:nowrap">Trigger</div>
<div style="position:absolute;left:1004px;top:113px;width:44px;height:17px;box-sizing:border-box;border-top:1px solid #696969;border-left:1px solid #696969;border-right:1px solid #fff;border-bottom:1px solid #fff;box-shadow:inset 1px 1px #a0a0a0;background-color:#fff;background-image:linear-gradient(45deg,#ececec 25%,transparent 25%,transparent 75%,#ececec 75%),linear-gradient(45deg,#ececec 25%,transparent 25%,transparent 75%,#ececec 75%);background-size:2px 2px;background-position:0 0,1px 1px;"></div>
<div style="position:absolute;left:1005px;top:117px;white-space:nowrap;line-height:13px;font-size:11px;width:44px;text-align:center;">Mode</div>
<div style="position:absolute;left:1048px;top:113px;width:46px;height:17px;box-sizing:border-box;background:#f0f0f0;border-top:1px solid #fff;border-left:1px solid #fff;border-right:1px solid #696969;border-bottom:1px solid #696969;box-shadow:inset -1px -1px #a0a0a0;"></div>
<div style="position:absolute;left:1048px;top:116px;white-space:nowrap;line-height:13px;font-size:11px;width:46px;text-align:center;">Source</div>
<div style="position:absolute;left:1004px;top:131px;width:89px;height:20px;box-sizing:border-box;background:#fff;border-top:1px solid #a0a0a0;border-left:1px solid #a0a0a0;border-right:1px solid #fff;border-bottom:1px solid #fff;box-shadow:inset 1px 1px #696969,inset -1px -1px #e3e3e3"></div>
<div style="position:absolute;left:1007px;top:135px;white-space:nowrap;line-height:13px;font-size:11px">Auto</div>
<div style="position:absolute;left:1075px;top:133px;width:16px;height:16px;box-sizing:border-box;background:#f0f0f0;border-top:1px solid #fff;border-left:1px solid #fff;border-right:1px solid #696969;border-bottom:1px solid #696969;box-shadow:inset -1px -1px #a0a0a0;"></div>
<div style="position:absolute;left:1079px;top:140px;width:0;height:0;border-left:4px solid transparent;border-right:4px solid transparent;border-top:4px solid #000"></div>
<div style="position:absolute;left:1008px;top:153px;white-space:nowrap;line-height:13px;font-size:12px;font-weight:bold;line-height:14px">Level</div>
<div style="position:absolute;left:1004px;top:169px;width:73px;height:20px;box-sizing:border-box;background:#fff;border-top:1px solid #a0a0a0;border-left:1px solid #a0a0a0;border-right:1px solid #fff;border-bottom:1px solid #fff;box-shadow:inset 1px 1px #696969,inset -1px -1px #e3e3e3"></div>
<div style="position:absolute;left:1007px;top:173px;white-space:nowrap;line-height:13px;font-size:11px">0</div>
<div style="position:absolute;left:1077px;top:169px;width:17px;height:10px;box-sizing:border-box;background:#f0f0f0;border-top:1px solid #fff;border-left:1px solid #fff;border-right:1px solid #696969;border-bottom:1px solid #696969;box-shadow:inset -1px -1px #a0a0a0;"></div>
<div style="position:absolute;left:1081px;top:172px;width:0;height:0;border-left:4px solid transparent;border-right:4px solid transparent;border-bottom:4px solid #000"></div>
<div style="position:absolute;left:1077px;top:179px;width:17px;height:10px;box-sizing:border-box;background:#f0f0f0;border-top:1px solid #fff;border-left:1px solid #fff;border-right:1px solid #696969;border-bottom:1px solid #696969;box-shadow:inset -1px -1px #a0a0a0;"></div>
<div style="position:absolute;left:1081px;top:182px;width:0;height:0;border-left:4px solid transparent;border-right:4px solid transparent;border-top:4px solid #000"></div>
<div style="position:absolute;left:1024px;top:193px;width:24px;height:19px;box-sizing:border-box;border-top:1px solid #696969;border-left:1px solid #696969;border-right:1px solid #fff;border-bottom:1px solid #fff;box-shadow:inset 1px 1px #a0a0a0;background-color:#fff;background-image:linear-gradient(45deg,#ececec 25%,transparent 25%,transparent 75%,#ececec 75%),linear-gradient(45deg,#ececec 25%,transparent 25%,transparent 75%,#ececec 75%);background-size:2px 2px;background-position:0 0,1px 1px;"></div>
<div style="position:absolute;left:1048px;top:193px;width:26px;height:19px;box-sizing:border-box;background:#f0f0f0;border-top:1px solid #fff;border-left:1px solid #fff;border-right:1px solid #696969;border-bottom:1px solid #696969;box-shadow:inset -1px -1px #a0a0a0;"></div>
<div style="position:absolute;left:1112px;top:103px;width:95px;height:177px;border:1px solid #a0a0a0;box-shadow:inset 1px 1px #fff,1px 1px #fff"></div>
<div style="position:absolute;left:1119px;top:98px;padding:0 1px;background:#f0f0f0;font-size:12px;font-weight:bold;line-height:14px;white-space:nowrap">Horizontal</div>
<div style="position:absolute;left:1126px;top:115px;white-space:nowrap;line-height:13px;font-size:12px;font-weight:bold;line-height:14px">Time/Div</div>
<div style="position:absolute;left:1122px;top:131px;width:60px;height:20px;box-sizing:border-box;background:#fff;border-top:1px solid #a0a0a0;border-left:1px solid #a0a0a0;border-right:1px solid #fff;border-bottom:1px solid #fff;box-shadow:inset 1px 1px #696969,inset -1px -1px #e3e3e3"></div>
<div style="position:absolute;left:1125px;top:135px;white-space:nowrap;line-height:13px;font-size:11px">10m</div>
<div style="position:absolute;left:1182px;top:131px;width:17px;height:10px;box-sizing:border-box;background:#f0f0f0;border-top:1px solid #fff;border-left:1px solid #fff;border-right:1px solid #696969;border-bottom:1px solid #696969;box-shadow:inset -1px -1px #a0a0a0;"></div>
<div style="position:absolute;left:1186px;top:134px;width:0;height:0;border-left:4px solid transparent;border-right:4px solid transparent;border-bottom:4px solid #000"></div>
<div style="position:absolute;left:1182px;top:141px;width:17px;height:10px;box-sizing:border-box;background:#f0f0f0;border-top:1px solid #fff;border-left:1px solid #fff;border-right:1px solid #696969;border-bottom:1px solid #696969;box-shadow:inset -1px -1px #a0a0a0;"></div>
<div style="position:absolute;left:1186px;top:144px;width:0;height:0;border-left:4px solid transparent;border-right:4px solid transparent;border-top:4px solid #000"></div>
<div style="position:absolute;left:1126px;top:153px;white-space:nowrap;line-height:13px;font-size:12px;font-weight:bold;line-height:14px">Position</div>
<div style="position:absolute;left:1122px;top:169px;width:60px;height:20px;box-sizing:border-box;background:#fff;border-top:1px solid #a0a0a0;border-left:1px solid #a0a0a0;border-right:1px solid #fff;border-bottom:1px solid #fff;box-shadow:inset 1px 1px #696969,inset -1px -1px #e3e3e3"></div>
<div style="position:absolute;left:1125px;top:173px;white-space:nowrap;line-height:13px;font-size:11px">0</div>
<div style="position:absolute;left:1182px;top:169px;width:17px;height:10px;box-sizing:border-box;background:#f0f0f0;border-top:1px solid #fff;border-left:1px solid #fff;border-right:1px solid #696969;border-bottom:1px solid #696969;box-shadow:inset -1px -1px #a0a0a0;"></div>
<div style="position:absolute;left:1186px;top:172px;width:0;height:0;border-left:4px solid transparent;border-right:4px solid transparent;border-bottom:4px solid #000"></div>
<div style="position:absolute;left:1182px;top:179px;width:17px;height:10px;box-sizing:border-box;background:#f0f0f0;border-top:1px solid #fff;border-left:1px solid #fff;border-right:1px solid #696969;border-bottom:1px solid #696969;box-shadow:inset -1px -1px #a0a0a0;"></div>
<div style="position:absolute;left:1186px;top:182px;width:0;height:0;border-left:4px solid transparent;border-right:4px solid transparent;border-top:4px solid #000"></div>
<div style="position:absolute;left:1126px;top:195px;white-space:nowrap;line-height:13px;font-size:12px;font-weight:bold;line-height:14px">Mode</div>
<div style="position:absolute;left:1122px;top:212px;width:39px;height:15px;box-sizing:border-box;border-top:1px solid #696969;border-left:1px solid #696969;border-right:1px solid #fff;border-bottom:1px solid #fff;box-shadow:inset 1px 1px #a0a0a0;background-color:#fff;background-image:linear-gradient(45deg,#ececec 25%,transparent 25%,transparent 75%,#ececec 75%),linear-gradient(45deg,#ececec 25%,transparent 25%,transparent 75%,#ececec 75%);background-size:2px 2px;background-position:0 0,1px 1px;"></div>
<div style="position:absolute;left:1123px;top:215px;white-space:nowrap;line-height:13px;font-size:11px;width:39px;text-align:center;">Y/T</div>
<div style="position:absolute;left:1161px;top:212px;width:39px;height:15px;box-sizing:border-box;background:#f0f0f0;border-top:1px solid #fff;border-left:1px solid #fff;border-right:1px solid #696969;border-bottom:1px solid #696969;box-shadow:inset -1px -1px #a0a0a0;"></div>
<div style="position:absolute;left:1161px;top:214px;white-space:nowrap;line-height:13px;font-size:11px;width:39px;text-align:center;">Y/X</div>
<div style="position:absolute;left:1125px;top:233px;white-space:nowrap;line-height:13px;font-size:12px;font-weight:bold;line-height:14px">X Source</div>
<div style="position:absolute;left:1122px;top:249px;width:77px;height:20px;box-sizing:border-box;background:#fff;border-top:1px solid #a0a0a0;border-left:1px solid #a0a0a0;border-right:1px solid #fff;border-bottom:1px solid #fff;box-shadow:inset 1px 1px #696969,inset -1px -1px #e3e3e3"></div>
<div style="position:absolute;left:1125px;top:252px;width:55px;height:14px;background:#3399ff;outline:1px dotted #000"></div>
<div style="position:absolute;left:1125px;top:253px;white-space:nowrap;line-height:13px;font-size:11px;color:#fff">VM1</div>
<div style="position:absolute;left:1181px;top:251px;width:16px;height:16px;box-sizing:border-box;background:#f0f0f0;border-top:1px solid #fff;border-left:1px solid #fff;border-right:1px solid #696969;border-bottom:1px solid #696969;box-shadow:inset -1px -1px #a0a0a0;"></div>
<div style="position:absolute;left:1185px;top:258px;width:0;height:0;border-left:4px solid transparent;border-right:4px solid transparent;border-top:4px solid #000"></div>
<div style="position:absolute;left:994px;top:228px;width:108px;height:51px;border:1px solid #a0a0a0;box-shadow:inset 1px 1px #fff,1px 1px #fff"></div>
<div style="position:absolute;left:1002px;top:223px;padding:0 1px;background:#f0f0f0;font-size:12px;font-weight:bold;line-height:14px;white-space:nowrap">Storage</div>
<div style="position:absolute;left:1004px;top:239px;width:44px;height:17px;box-sizing:border-box;border-top:1px solid #696969;border-left:1px solid #696969;border-right:1px solid #fff;border-bottom:1px solid #fff;box-shadow:inset 1px 1px #a0a0a0;background-color:#fff;background-image:linear-gradient(45deg,#ececec 25%,transparent 25%,transparent 75%,#ececec 75%),linear-gradient(45deg,#ececec 25%,transparent 25%,transparent 75%,#ececec 75%);background-size:2px 2px;background-position:0 0,1px 1px;"></div>
<div style="position:absolute;left:1005px;top:243px;white-space:nowrap;line-height:13px;font-size:11px;width:44px;text-align:center;">Run</div>
<div style="position:absolute;left:1049px;top:239px;width:45px;height:17px;box-sizing:border-box;background:#f0f0f0;border-top:1px solid #fff;border-left:1px solid #fff;border-right:1px solid #696969;border-bottom:1px solid #696969;box-shadow:inset -1px -1px #a0a0a0;"></div>
<div style="position:absolute;left:1049px;top:242px;white-space:nowrap;line-height:13px;font-size:11px;width:45px;text-align:center;">Stop</div>
<div style="position:absolute;left:1004px;top:257px;width:45px;height:17px;box-sizing:border-box;background:#f0f0f0;border-top:1px solid #fff;border-left:1px solid #fff;border-right:1px solid #696969;border-bottom:1px solid #696969;box-shadow:inset -1px -1px #a0a0a0;"></div>
<div style="position:absolute;left:1004px;top:260px;white-space:nowrap;line-height:13px;font-size:11px;width:45px;text-align:center;">Store</div>
<div style="position:absolute;left:1049px;top:257px;width:45px;height:17px;box-sizing:border-box;background:#f0f0f0;border-top:1px solid #fff;border-left:1px solid #fff;border-right:1px solid #696969;border-bottom:1px solid #696969;box-shadow:inset -1px -1px #a0a0a0;"></div>
<div style="position:absolute;left:1049px;top:260px;white-space:nowrap;line-height:13px;font-size:11px;width:45px;text-align:center;">Erase</div>
<div style="position:absolute;left:994px;top:290px;width:213px;height:109px;border:1px solid #a0a0a0;box-shadow:inset 1px 1px #fff,1px 1px #fff"></div>
<div style="position:absolute;left:1002px;top:285px;padding:0 1px;background:#f0f0f0;font-size:12px;font-weight:bold;line-height:14px;white-space:nowrap">Channel</div>
<div style="position:absolute;left:1004px;top:301px;width:89px;height:20px;box-sizing:border-box;background:#fff;border-top:1px solid #a0a0a0;border-left:1px solid #a0a0a0;border-right:1px solid #fff;border-bottom:1px solid #fff;box-shadow:inset 1px 1px #696969,inset -1px -1px #e3e3e3"></div>
<div style="position:absolute;left:1007px;top:305px;white-space:nowrap;line-height:13px;font-size:11px">VM1</div>
<div style="position:absolute;left:1075px;top:303px;width:16px;height:16px;box-sizing:border-box;background:#f0f0f0;border-top:1px solid #fff;border-left:1px solid #fff;border-right:1px solid #696969;border-bottom:1px solid #696969;box-shadow:inset -1px -1px #a0a0a0;"></div>
<div style="position:absolute;left:1079px;top:310px;width:0;height:0;border-left:4px solid transparent;border-right:4px solid transparent;border-top:4px solid #000"></div>
<div style="position:absolute;left:1003px;top:330px;width:89px;height:37px;border:1px solid #a0a0a0;box-shadow:inset 1px 1px #fff,1px 1px #fff"></div>
<div style="position:absolute;left:1010px;top:325px;padding:0 1px;background:#f0f0f0;font-size:12px;font-weight:bold;line-height:14px;white-space:nowrap">Coupling</div>
<div style="position:absolute;left:1011px;top:343px;width:25px;height:20px;box-sizing:border-box;border-top:1px solid #696969;border-left:1px solid #696969;border-right:1px solid #fff;border-bottom:1px solid #fff;box-shadow:inset 1px 1px #a0a0a0;background-color:#fff;background-image:linear-gradient(45deg,#ececec 25%,transparent 25%,transparent 75%,#ececec 75%),linear-gradient(45deg,#ececec 25%,transparent 25%,transparent 75%,#ececec 75%);background-size:2px 2px;background-position:0 0,1px 1px;"></div>
<div style="position:absolute;left:1012px;top:348px;white-space:nowrap;line-height:13px;font-size:11px;width:25px;text-align:center;">DC</div>
<div style="position:absolute;left:1036px;top:343px;width:25px;height:20px;box-sizing:border-box;background:#f0f0f0;border-top:1px solid #fff;border-left:1px solid #fff;border-right:1px solid #696969;border-bottom:1px solid #696969;box-shadow:inset -1px -1px #a0a0a0;"></div>
<div style="position:absolute;left:1061px;top:343px;width:25px;height:20px;box-sizing:border-box;background:#f0f0f0;border-top:1px solid #fff;border-left:1px solid #fff;border-right:1px solid #696969;border-bottom:1px solid #696969;box-shadow:inset -1px -1px #a0a0a0;"></div>
<div style="position:absolute;left:1061px;top:347px;white-space:nowrap;line-height:13px;font-size:11px;width:25px;text-align:center;">AC</div>
<div style="position:absolute;left:1011px;top:373px;width:29px;height:22px;box-sizing:border-box;border-top:1px solid #696969;border-left:1px solid #696969;border-right:1px solid #fff;border-bottom:1px solid #fff;box-shadow:inset 1px 1px #a0a0a0;background-color:#fff;background-image:linear-gradient(45deg,#ececec 25%,transparent 25%,transparent 75%,#ececec 75%),linear-gradient(45deg,#ececec 25%,transparent 25%,transparent 75%,#ececec 75%);background-size:2px 2px;background-position:0 0,1px 1px;"></div>
<div style="position:absolute;left:1012px;top:380px;white-space:nowrap;line-height:13px;font-size:11.5px;font-weight:bold;width:29px;text-align:center;">On</div>
<div style="position:absolute;left:1056px;top:373px;width:30px;height:22px;box-sizing:border-box;background:#f0f0f0;border-top:1px solid #fff;border-left:1px solid #fff;border-right:1px solid #696969;border-bottom:1px solid #696969;box-shadow:inset -1px -1px #a0a0a0;"></div>
<div style="position:absolute;left:1104px;top:298px;width:94px;height:93px;border:1px solid #a0a0a0;box-shadow:inset 1px 1px #fff,1px 1px #fff"></div>
<div style="position:absolute;left:1110px;top:293px;padding:0 1px;background:#f0f0f0;font-size:12px;font-weight:bold;line-height:14px;white-space:nowrap">Vertical</div>
<div style="position:absolute;left:1118px;top:311px;white-space:nowrap;line-height:13px;font-size:12px;font-weight:bold;line-height:14px">Volts/Div</div>
<div style="position:absolute;left:1114px;top:327px;width:60px;height:20px;box-sizing:border-box;background:#fff;border-top:1px solid #a0a0a0;border-left:1px solid #a0a0a0;border-right:1px solid #fff;border-bottom:1px solid #fff;box-shadow:inset 1px 1px #696969,inset -1px -1px #e3e3e3"></div>
<div style="position:absolute;left:1117px;top:331px;white-space:nowrap;line-height:13px;font-size:11px">1</div>
<div style="position:absolute;left:1175px;top:327px;width:16px;height:10px;box-sizing:border-box;background:#f0f0f0;border-top:1px solid #fff;border-left:1px solid #fff;border-right:1px solid #696969;border-bottom:1px solid #696969;box-shadow:inset -1px -1px #a0a0a0;"></div>
<div style="position:absolute;left:1179px;top:330px;width:0;height:0;border-left:4px solid transparent;border-right:4px solid transparent;border-bottom:4px solid #000"></div>
<div style="position:absolute;left:1175px;top:337px;width:16px;height:10px;box-sizing:border-box;background:#f0f0f0;border-top:1px solid #fff;border-left:1px solid #fff;border-right:1px solid #696969;border-bottom:1px solid #696969;box-shadow:inset -1px -1px #a0a0a0;"></div>
<div style="position:absolute;left:1179px;top:340px;width:0;height:0;border-left:4px solid transparent;border-right:4px solid transparent;border-top:4px solid #000"></div>
<div style="position:absolute;left:1121px;top:349px;white-space:nowrap;line-height:13px;font-size:12px;font-weight:bold;line-height:14px">Position</div>
<div style="position:absolute;left:1114px;top:365px;width:60px;height:20px;box-sizing:border-box;background:#fff;border-top:1px solid #a0a0a0;border-left:1px solid #a0a0a0;border-right:1px solid #fff;border-bottom:1px solid #fff;box-shadow:inset 1px 1px #696969,inset -1px -1px #e3e3e3"></div>
<div style="position:absolute;left:1117px;top:369px;white-space:nowrap;line-height:13px;font-size:11px">-500m</div>
<div style="position:absolute;left:1175px;top:365px;width:16px;height:10px;box-sizing:border-box;background:#f0f0f0;border-top:1px solid #fff;border-left:1px solid #fff;border-right:1px solid #696969;border-bottom:1px solid #696969;box-shadow:inset -1px -1px #a0a0a0;"></div>
<div style="position:absolute;left:1179px;top:368px;width:0;height:0;border-left:4px solid transparent;border-right:4px solid transparent;border-bottom:4px solid #000"></div>
<div style="position:absolute;left:1175px;top:375px;width:16px;height:10px;box-sizing:border-box;background:#f0f0f0;border-top:1px solid #fff;border-left:1px solid #fff;border-right:1px solid #696969;border-bottom:1px solid #696969;box-shadow:inset -1px -1px #a0a0a0;"></div>
<div style="position:absolute;left:1179px;top:378px;width:0;height:0;border-left:4px solid transparent;border-right:4px solid transparent;border-top:4px solid #000"></div>
<div style="position:absolute;left:994px;top:407px;width:216px;height:20px;box-sizing:border-box;background:#f0f0f0;border-top:1px solid #fff;border-left:1px solid #fff;border-right:1px solid #696969;border-bottom:1px solid #696969;box-shadow:inset -1px -1px #a0a0a0;"></div>
<div style="position:absolute;left:994px;top:412px;white-space:nowrap;line-height:13px;font-size:12px;font-weight:bold;width:216px;text-align:center;">Auto</div>
<div style="position:absolute;left:684px;top:387px;width:197px;height:37px;border:1px solid #a0a0a0;box-shadow:inset 1px 1px #fff,1px 1px #fff"></div>
<div style="position:absolute;left:691px;top:382px;padding:0 1px;background:#f0f0f0;font-size:12px;font-weight:bold;line-height:14px;white-space:nowrap">Cursor</div>
<div style="position:absolute;left:694px;top:398px;width:22px;height:20px;box-sizing:border-box;border-top:1px solid #696969;border-left:1px solid #696969;border-right:1px solid #fff;border-bottom:1px solid #fff;box-shadow:inset 1px 1px #a0a0a0;background-color:#fff;background-image:linear-gradient(45deg,#ececec 25%,transparent 25%,transparent 75%,#ececec 75%),linear-gradient(45deg,#ececec 25%,transparent 25%,transparent 75%,#ececec 75%);background-size:2px 2px;background-position:0 0,1px 1px;"></div>
<div style="position:absolute;left:695px;top:404px;white-space:nowrap;line-height:13px;font-size:11.5px;font-weight:bold;width:22px;text-align:center;">A</div>
<div style="position:absolute;left:716px;top:398px;width:24px;height:20px;box-sizing:border-box;background:#f0f0f0;border-top:1px solid #fff;border-left:1px solid #fff;border-right:1px solid #696969;border-bottom:1px solid #696969;box-shadow:inset -1px -1px #a0a0a0;"></div>
<div style="position:absolute;left:716px;top:403px;white-space:nowrap;line-height:13px;font-size:11.5px;font-weight:bold;width:24px;text-align:center;">B</div>
<div style="position:absolute;left:746px;top:398px;width:23px;height:20px;box-sizing:border-box;background:#f0f0f0;border-top:1px solid #fff;border-left:1px solid #fff;border-right:1px solid #696969;border-bottom:1px solid #696969;box-shadow:inset -1px -1px #a0a0a0;"></div>
<div style="position:absolute;left:746px;top:403px;white-space:nowrap;line-height:13px;font-size:11.5px;font-weight:bold;width:23px;text-align:center;">On</div>
<div style="position:absolute;left:775px;top:398px;width:23px;height:21px;box-sizing:border-box;background:#f0f0f0;border-top:1px solid #fff;border-left:1px solid #fff;border-right:1px solid #696969;border-bottom:1px solid #696969;box-shadow:inset -1px -1px #a0a0a0;"></div>
<div style="position:absolute;left:798px;top:398px;width:23px;height:21px;box-sizing:border-box;background:#f0f0f0;border-top:1px solid #fff;border-left:1px solid #fff;border-right:1px solid #696969;border-bottom:1px solid #696969;box-shadow:inset -1px -1px #a0a0a0;"></div>
<div style="position:absolute;left:827px;top:398px;width:23px;height:21px;box-sizing:border-box;background:#f0f0f0;border-top:1px solid #fff;border-left:1px solid #fff;border-right:1px solid #696969;border-bottom:1px solid #696969;box-shadow:inset -1px -1px #a0a0a0;"></div>
<div style="position:absolute;left:850px;top:398px;width:23px;height:21px;box-sizing:border-box;background:#f0f0f0;border-top:1px solid #fff;border-left:1px solid #fff;border-right:1px solid #696969;border-bottom:1px solid #696969;box-shadow:inset -1px -1px #a0a0a0;"></div>
<div style="position:absolute;left:891px;top:387px;width:95px;height:37px;border:1px solid #a0a0a0;box-shadow:inset 1px 1px #fff,1px 1px #fff"></div>
<div style="position:absolute;left:898px;top:382px;padding:0 1px;background:#f0f0f0;font-size:12px;font-weight:bold;line-height:14px;white-space:nowrap">Data</div>
<div style="position:absolute;left:901px;top:398px;width:23px;height:21px;box-sizing:border-box;background:#f0f0f0;border-top:1px solid #fff;border-left:1px solid #fff;border-right:1px solid #696969;border-bottom:1px solid #696969;box-shadow:inset -1px -1px #a0a0a0;"></div>
<div style="position:absolute;left:929px;top:398px;width:23px;height:21px;box-sizing:border-box;background:#f0f0f0;border-top:1px solid #fff;border-left:1px solid #fff;border-right:1px solid #696969;border-bottom:1px solid #696969;box-shadow:inset -1px -1px #a0a0a0;"></div>
<div style="position:absolute;left:957px;top:398px;width:23px;height:21px;box-sizing:border-box;background:#f0f0f0;border-top:1px solid #fff;border-left:1px solid #fff;border-right:1px solid #696969;border-bottom:1px solid #696969;box-shadow:inset -1px -1px #a0a0a0;"></div>
<svg style="position:absolute;left:0;top:0" width="1243" height="645">
<path d="M1033 209.5 H1037.5 V199.5 H1042" fill="none" stroke="#000" stroke-width="1.6"/><path d="M1033.5 206 L1037.5 202 L1041.5 206 Z" fill="#000"/>
<path d="M1057 198.5 H1061.5 V208.5 H1066" fill="none" stroke="#000" stroke-width="1.6"/><path d="M1057.5 202 L1061.5 206 L1065.5 202 Z" fill="#000"/>
<path d="M1048.5 347 V352 M1043 352.5 H1054 M1045 354.5 H1052 M1047 356.5 H1050" fill="none" stroke="#000" stroke-width="1"/>
<path d="M1062 392 L1067 387" stroke="#000" stroke-width="1.3"/><path d="M1066 388 L1075 379" stroke="#000" stroke-width="3.2"/><path d="M1068 386 L1070 384" stroke="#fff" stroke-width="1.2"/><path d="M1075 379 L1078 376 L1081 379" fill="none" stroke="#000" stroke-width="1.2"/>
<path d="M784 408.5 L789 404 V413 Z" fill="#000"/><path d="M812 408.5 L807 404 V413 Z" fill="#000"/>
<path d="M838.5 404 L842.5 409 H834.5 Z M838.5 408 L842.5 413 H834.5 Z" fill="#000"/>
<path d="M861.5 413 L865.5 408 H857.5 Z M861.5 409 L865.5 404 H857.5 Z" fill="#000"/>
<rect x="906.5" y="404.5" width="14" height="11" fill="none" stroke="#a0a0a0" stroke-width="1"/><path d="M905 403.5 H909 V400.5 L914 406.5 L909 412.5 V409.5 H905 Z" fill="#a0a0a0"/>
<rect x="933.5" y="401.5" width="13" height="11" fill="none" stroke="#a0a0a0" stroke-width="1"/><path d="M938 407.5 H943 V404.5 L949 410.5 L943 416.5 V413.5 H938 Z" fill="#a0a0a0"/>
<rect x="961.5" y="402.5" width="13" height="11" fill="#fff" stroke="#707070" stroke-width="1"/><path d="M962.5 412.5 Q966 406 973.5 403.5" fill="none" stroke="#f00" stroke-width="1.3"/>
</svg>
</body></html>
